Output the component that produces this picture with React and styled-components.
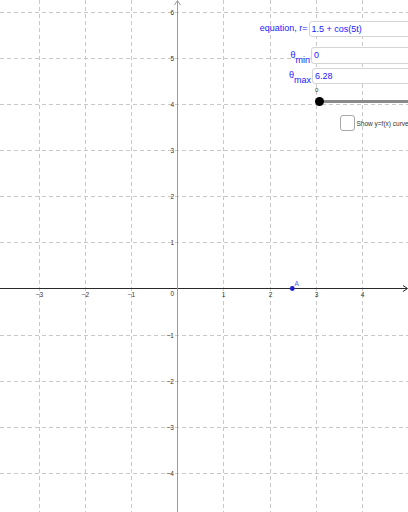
import React from "react";
import styled, { createGlobalStyle } from "styled-components";

const Global = createGlobalStyle`
  html, body { margin: 0; padding: 0; background: #fff; }
  body { font-family: "Liberation Sans", Arial, sans-serif; }
`;

const Stage = styled.div`
  position: relative;
  width: 408px;
  height: 512px;
  overflow: hidden;
  background: #fff;
`;

const Graph = styled.svg`
  display: block;
  width: 408px;
  height: 512px;
`;

const Panel = styled.div`
  position: absolute;
  top: 0;
  left: 250px;
  width: 220px;
  display: flex;
  flex-direction: column;
  font-family: "Liberation Sans", Arial, sans-serif;
`;

const FieldRow = styled.div`
  display: grid;
  grid-template-columns: ${(p) => p.$label}px 110px;
  align-items: center;
  margin-top: ${(p) => p.$gap}px;
  height: ${(p) => p.$h}px;
`;

const Label = styled.span`
  justify-self: end;
  color: #1a1aff;
  font-size: 9px;
  line-height: 1;
  white-space: nowrap;
  padding-right: 1px;
`;

const Sub = styled.sub`
  font-size: 9px;
  vertical-align: -5px;
  line-height: 0;
`;

const Field = styled.div`
  box-sizing: border-box;
  height: 100%;
  border: 1px solid #d4d4d4;
  border-radius: 3px;
  background: #fff;
  color: #1a1aff;
  font-size: 9px;
  display: flex;
  align-items: center;
  padding-left: 2px;
  white-space: nowrap;
`;

const SliderBlock = styled.div`
  position: relative;
  margin-top: 2px;
  margin-left: 64px;
  height: 20px;
`;

const SliderMin = styled.span`
  position: absolute;
  left: 1px;
  top: 1px;
  font-size: 6px;
  color: #333;
`;

const Track = styled.div`
  position: absolute;
  left: 5px;
  top: 14.5px;
  width: 120px;
  height: 3px;
  background: #8a8a8a;
`;

const Knob = styled.div`
  position: absolute;
  left: 0.5px;
  top: 11.5px;
  width: 9px;
  height: 9px;
  border-radius: 50%;
  background: #000;
`;

const CheckRow = styled.label`
  display: flex;
  align-items: center;
  gap: 2px;
  margin-top: 9.5px;
  margin-left: 89.5px;
`;

const Box = styled.span`
  box-sizing: border-box;
  width: 15px;
  height: 16px;
  border: 1px solid #a8a8a8;
  border-radius: 3px;
  background: #fff;
`;

const CheckText = styled.span`
  font-size: 6.5px;
  color: #333;
  white-space: nowrap;
`;

const OX = 177.3;
const OY = 288.5;
const U = 46.1;

const xs = [-3, -2, -1, 1, 2, 3, 4, 5];
const ys = [-4, -3, -2, -1, 1, 2, 3, 4, 5, 6];
const px = (k) => Math.round(OX + k * U) + 0.5;
const py = (k) => Math.round(OY - k * U) + 0.5;
const lab = (n) => (n < 0 ? "\u2212" + Math.abs(n) : String(n));

function Plane() {
  const ax = 177.5;
  const ay = 288.5;
  return (
    <Graph viewBox="0 0 408 512">
      <g stroke="#c8c8c8" strokeWidth="1" strokeDasharray="4 3">
        {xs.map((k) => (
          <line key={"v" + k} x1={px(k)} y1="0" x2={px(k)} y2="512" />
        ))}
        {ys.map((k) => (
          <line key={"h" + k} x1="0" y1={py(k)} x2="408" y2={py(k)} />
        ))}
      </g>
      <line x1="0" y1={ay} x2="407" y2={ay} stroke="#2a2a2a" strokeWidth="1" />
      <path d={`M403 ${ay - 3} L407.5 ${ay} L403 ${ay + 3}`} fill="none" stroke="#2a2a2a" strokeWidth="1" />
      <line x1={ax} y1="1" x2={ax} y2="512" stroke="#9a9a9a" strokeWidth="1" />
      <path d={`M${ax - 3} 5 L${ax} 0.5 L${ax + 3} 5`} fill="none" stroke="#9a9a9a" strokeWidth="1" />
      <g fontFamily="'Liberation Sans', Arial, sans-serif" fontSize="6.5" fill="#333">
        {xs.filter((k) => k !== 5).map((k) => (
          <text key={"tx" + k} x={px(k)} y="296.5" textAnchor="middle">
            {lab(k)}
          </text>
        ))}
        {ys.map((k) => (
          <text key={"ty" + k} x="174" y={py(k) + 2.5} textAnchor="end">
            {lab(k)}
          </text>
        ))}
        <text x="174" y="296" textAnchor="end">0</text>
      </g>
      <circle cx="292.3" cy={ay} r="2.4" fill="#1c1cc8" />
      <text x="294.5" y="285.5" fontFamily="'Liberation Sans', Arial, sans-serif" fontSize="6.5" fill="#5a5aff">
        A
      </text>
    </Graph>
  );
}

export default function App() {
  return (
    <>
      <Global />
      <Stage>
        <Plane />
        <Panel>
          <FieldRow $label={58.5} $gap={20.5} $h={16.5}>
            <Label>equation, r=</Label>
            <Field>1.5 + cos(5t)</Field>
          </FieldRow>
          <FieldRow $label={61} $gap={10} $h={16.5}>
            <Label>
              θ<Sub>min</Sub>
            </Label>
            <Field>0</Field>
          </FieldRow>
          <FieldRow $label={62} $gap={4.5} $h={15.5}>
            <Label>
              θ<Sub>max</Sub>
            </Label>
            <Field>6.28</Field>
          </FieldRow>
          <SliderBlock>
            <SliderMin>0</SliderMin>
            <Track />
            <Knob />
          </SliderBlock>
          <CheckRow>
            <Box />
            <CheckText>Show y=f(x) curve</CheckText>
          </CheckRow>
        </Panel>
      </Stage>
    </>
  );
}
